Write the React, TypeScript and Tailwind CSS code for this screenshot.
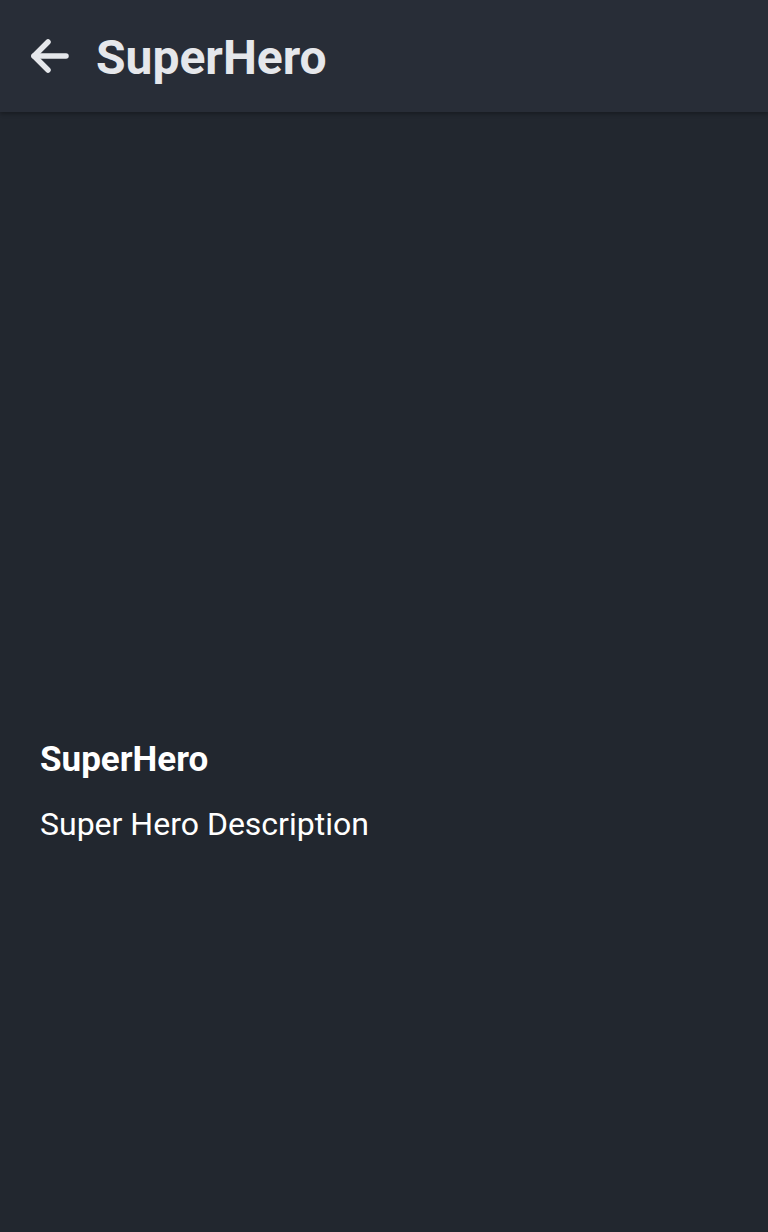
export default function App() {
  return (
    <div className="min-h-[1232px] w-full bg-[#22272f] flex flex-col" style={{ fontFamily: "Roboto, 'Noto Sans', sans-serif" }}>
      <header className="h-[112px] bg-[#282d37] flex items-center shadow-[0_2px_4px_rgba(0,0,0,0.3)] relative z-10">
        <svg className="ml-[28px]" width="44" height="44" viewBox="0 0 44 44" fill="none" stroke="#e5e7eb" strokeWidth="5.5" strokeLinecap="round" strokeLinejoin="round">
          <path d="M6 22H38" />
          <path d="M20 8L6 22L20 36" />
        </svg>
        <h1 className="ml-[24px] mt-[4px] text-[48px] font-bold text-[#e5e7eb] leading-none">SuperHero</h1>
      </header>
      <main className="flex-1 flex flex-col px-[40px] pt-[630px]">
        <h2 className="text-[35px] font-bold text-white leading-none">SuperHero</h2>
        <p className="mt-[31px] text-[32px] text-white leading-none">Super Hero Description</p>
      </main>
    </div>
  );
}
